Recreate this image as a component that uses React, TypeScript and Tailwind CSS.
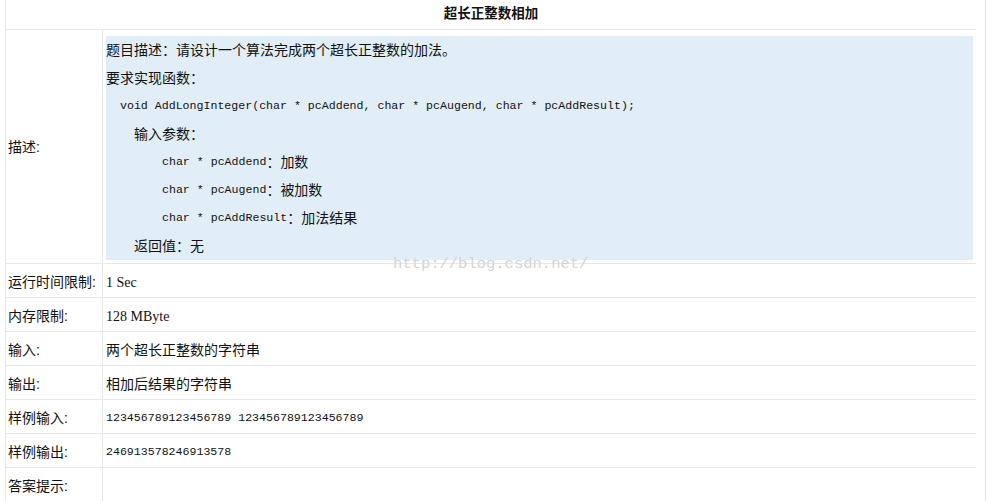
const cjk = "font-['Liberation_Sans','Noto_Sans_CJK_SC',sans-serif]";
const mono = "font-['Liberation_Mono','Noto_Sans_CJK_SC',monospace]";
const serif = "font-['Liberation_Serif','Noto_Sans_CJK_SC',serif]";

const rows = [
  { label: '运行时间限制:', value: <span className={`${serif} text-[14px]`}>1 Sec</span> },
  { label: '内存限制:', value: <span className={`${serif} text-[14px]`}>128 MByte</span> },
  { label: '输入:', value: <span className={`${cjk} text-[14px]`}>两个超长正整数的字符串</span> },
  { label: '输出:', value: <span className={`${cjk} text-[14px]`}>相加后结果的字符串</span> },
  { label: '样例输入:', value: <span className={`${mono} text-[11.6px]`}>123456789123456789 123456789123456789</span> },
  { label: '样例输出:', value: <span className={`${mono} text-[11.6px]`}>246913578246913578</span> },
  { label: '答案提示:', value: null },
];

// one line of the blue box, fixed at 28px so mixed fonts don't grow it
function Line({ indent, children }: { indent: string; children: React.ReactNode }) {
  return <div className={`h-[28px] flex items-center whitespace-pre ${indent}`}>{children}</div>;
}

function Code({ text, note }: { text: string; note: string }) {
  return (
    <Line indent="pl-[56px]">
      <span className={`${mono} text-[11.6px]`}>{text}</span>
      <span className={`${cjk} text-[14px]`}>：{note}</span>
    </Line>
  );
}

export default function App() {
  return (
    <div className="relative flex w-[989px] h-[501px] overflow-hidden bg-white text-[#111]">
      <div className="w-[5px] shrink-0" />
      <div className="w-[971px] shrink-0 border-l border-[#e8e8e8]">
        <div className={`h-[30px] border-b border-[#e8e8e8] flex items-center justify-center ${cjk} text-[13.5px] font-bold`}>
          超长正整数相加
        </div>

        <div className="flex h-[234px] border-b border-[#e8e8e8]">
          <div className={`w-[97px] shrink-0 border-r border-[#e8e8e8] flex items-center pl-[2px] pt-[2px] ${cjk} text-[14px]`}>
            描述:
          </div>
          <div className="flex-1 pl-[3px] pr-[3px] pt-[6px] pb-[3px]">
            <div className={`h-[224px] bg-[#e2eef7] ${cjk} text-[14px]`}>
              <Line indent="">题目描述：请设计一个算法完成两个超长正整数的加法。</Line>
              <Line indent="">要求实现函数：</Line>
              <Line indent="pl-[14px]">
                <span className={`${mono} text-[11.6px]`}>
                  void AddLongInteger(char * pcAddend, char * pcAugend, char * pcAddResult);
                </span>
              </Line>
              <Line indent="pl-[28px]">输入参数：</Line>
              <Code text="char * pcAddend" note="加数" />
              <Code text="char * pcAugend" note="被加数" />
              <Code text="char * pcAddResult" note="加法结果" />
              <Line indent="pl-[28px]">返回值：无</Line>
            </div>
          </div>
        </div>

        {rows.map((r) => (
          <div key={r.label} className="flex h-[34px] border-b border-[#e8e8e8]">
            <div className={`w-[97px] shrink-0 border-r border-[#e8e8e8] flex items-center pl-[2px] pt-[3px] ${cjk} text-[14px]`}>
              {r.label}
            </div>
            <div className="flex-1 flex items-center pl-[3px] pt-[3px]">{r.value}</div>
          </div>
        ))}
      </div>
      <div className="w-[9px] shrink-0" />
      <div className="w-px shrink-0 bg-[#e4e4e4]" />

      <div className={`absolute left-[393px] top-[253px] ${mono} text-[15.5px] text-[#d4d4d4] pointer-events-none`}>
        http://blog.csdn.net/
      </div>
    </div>
  );
}
